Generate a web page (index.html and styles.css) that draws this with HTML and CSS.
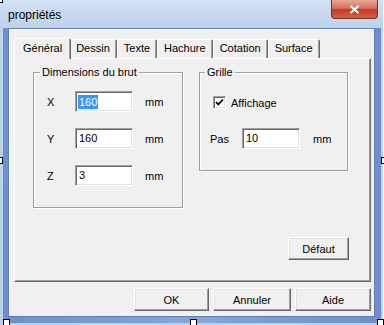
FILE: index.html
```html
<!DOCTYPE html>
<html>
<head>
    <title>propriétés</title>
    <link rel="stylesheet" href="styles.css">
</head>
<body>
    <div class="window">
        <div class="titlebar">
            <span class="title">propriétés</span>
            <div class="close">
                <svg width="11" height="9" viewBox="0 0 11 9">
                    <path d="M1.5 1 L9.5 8 M9.5 1 L1.5 8" stroke="#fff" stroke-width="2.2" fill="none"/>
                </svg>
            </div>
        </div>
        <div class="frame">
            <div class="client">
                <div class="tabs">
                    <div class="tab active">Général</div>
                    <div class="tab">Dessin</div>
                    <div class="tab">Texte</div>
                    <div class="tab">Hachure</div>
                    <div class="tab">Cotation</div>
                    <div class="tab">Surface</div>
                </div>
                <div class="panel">
                    <fieldset class="group dims">
                        <legend>Dimensions du brut</legend>
                        <div class="field">
                            <label>X</label>
                            <div class="textbox"><span class="sel">160</span></div>
                            <span class="unit">mm</span>
                        </div>
                        <div class="field">
                            <label>Y</label>
                            <div class="textbox">160</div>
                            <span class="unit">mm</span>
                        </div>
                        <div class="field">
                            <label>Z</label>
                            <div class="textbox">3</div>
                            <span class="unit">mm</span>
                        </div>
                    </fieldset>
                    <div class="side">
                        <fieldset class="group grille">
                            <legend>Grille</legend>
                            <div class="check-row">
                                <div class="checkbox">
                                    <svg width="9" height="9" viewBox="0 0 9 9">
                                        <path d="M1 4 L3.3 6.5 L8 1.5" stroke="#000" stroke-width="1.8" fill="none"/>
                                    </svg>
                                </div>
                                <span>Affichage</span>
                            </div>
                            <div class="field pas">
                                <label>Pas</label>
                                <div class="textbox">10</div>
                                <span class="unit">mm</span>
                            </div>
                        </fieldset>
                        <button class="btn defaut">Défaut</button>
                    </div>
                </div>
                <div class="actions">
                    <button class="btn ok">OK</button>
                    <button class="btn annuler">Annuler</button>
                    <button class="btn aide">Aide</button>
                </div>
            </div>
        </div>
    </div>

    <div class="handle h-tl"></div>
    <div class="handle h-left"></div>
    <div class="handle h-right"></div>
    <div class="handle h-bl"></div>
    <div class="handle h-bottom"></div>
    <div class="handle h-br"></div>
</body>
</html>
```

FILE: styles.css
```css
body {
    margin: 0;
    background-color: #ffffff;
    font-family: "Liberation Sans", Arial, sans-serif;
    font-size: 11px;
    color: #000;
    overflow: hidden;
}

.window {
    width: 383px;
    height: 325px;
    box-sizing: border-box;
    background: linear-gradient(#d3e1f3, #bdd2eb 28px, #bcd1ea);
    display: flex;
    flex-direction: column;
}

.titlebar {
    height: 28px;
    display: flex;
    align-items: flex-start;
    padding-left: 8px;
    flex-shrink: 0;
}

.title {
    font-size: 12px;
    line-height: 16px;
    margin-top: 7px;
}

.close {
    margin-left: auto;
    margin-right: 5px;
    width: 47px;
    height: 19px;
    box-sizing: border-box;
    border: 1px solid #7f2b1f;
    border-top: none;
    border-radius: 0 0 4px 4px;
    background: linear-gradient(#e9a99b, #d7705d 45%, #c2391f 55%, #d0644c);
    display: flex;
    align-items: center;
    justify-content: center;
}

.frame {
    flex: 1;
    margin: 0 2px 2px 3px;
    padding: 0 6px 6px 5px;
    background: linear-gradient(90deg, #6e8fc8, #87a6d8 50%, #6e8fc8);
    display: flex;
}

.client {
    flex: 1;
    border: 1px solid #5e7db3;
    background-color: #f0f0f0;
    box-shadow: inset 1px 1px #ffffff;
    padding: 8px 3px 0 5px;
    display: flex;
    flex-direction: column;
}

/* tabs */
.tabs {
    display: flex;
    align-items: flex-end;
    height: 21px;
    padding-left: 2px;
}

.tab {
    height: 18px;
    line-height: 17px;
    padding: 0 6px;
    border-top: 1px solid #ffffff;
    border-left: 1px solid #ffffff;
    border-right: 1px solid #696969;
    border-radius: 2px 2px 0 0;
    box-shadow: inset -1px 0 #a0a0a0;
}

.tab.active {
    height: 20px;
    line-height: 19px;
    margin: 0 -2px -1px -2px;
    padding: 0 8px;
    background-color: #f0f0f0;
    position: relative;
    z-index: 1;
}

.panel {
    height: 224px;
    box-sizing: border-box;
    border-top: 1px solid #ffffff;
    border-left: 1px solid #ffffff;
    border-right: 1px solid #696969;
    border-bottom: 1px solid #696969;
    box-shadow: inset -1px -1px #a0a0a0;
    padding: 7px 0 0 18px;
    display: flex;
    align-items: flex-start;
    gap: 16px;
}

/* group boxes */
.group {
    margin: 0;
    border: 1px solid #a0a0a0;
    box-shadow: 1px 1px 0 #ffffff, inset 1px 1px 0 #ffffff;
    box-sizing: border-box;
}

.group legend {
    padding: 0 2px;
    line-height: 13px;
}

.dims {
    width: 150px;
    height: 142px;
    padding: 12px 0 0 13px;
}

.dims legend {
    margin-left: -7px;
}

.grille {
    width: 149px;
    height: 105px;
    padding: 17px 0 0 10px;
}

.grille legend {
    margin-left: -5px;
}

.field {
    display: flex;
    align-items: center;
    margin-bottom: 16px;
}

.field label {
    width: 28px;
}

.field .unit {
    margin-left: 12px;
}

.textbox {
    width: 58px;
    height: 21px;
    box-sizing: border-box;
    border: 1px solid;
    border-color: #a0a0a0 #ffffff #ffffff #a0a0a0;
    box-shadow: inset 1px 1px #696969, inset -1px -1px #e3e3e3;
    background-color: #ffffff;
    padding: 3px 0 0 3px;
    line-height: 13px;
}

.sel {
    display: inline-block;
    background-color: #3399ff;
    color: #ffffff;
    height: 14px;
    line-height: 14px;
    margin-left: -1px;
    padding: 0 1px;
}

.check-row {
    display: flex;
    align-items: center;
    gap: 5px;
    margin-left: 3px;
    height: 13px;
    margin-bottom: 19px;
}

.checkbox {
    width: 13px;
    height: 13px;
    box-sizing: border-box;
    border: 1px solid;
    border-color: #a0a0a0 #ffffff #ffffff #a0a0a0;
    box-shadow: inset 1px 1px #696969, inset -1px -1px #e3e3e3;
    background-color: #ffffff;
    display: flex;
    align-items: center;
    justify-content: center;
}

.pas label {
    width: 32px;
}

.pas .unit {
    margin-left: 13px;
}

.side {
    display: flex;
    flex-direction: column;
    align-items: flex-end;
}

/* buttons */
.btn {
    font-family: inherit;
    font-size: 11px;
    color: #000;
    height: 23px;
    padding: 0;
    background-color: #f0f0f0;
    border: 1px solid;
    border-color: #ffffff #696969 #696969 #ffffff;
    box-shadow: inset -1px -1px #a0a0a0, inset 1px 1px #e3e3e3;
}

.defaut {
    width: 61px;
    margin-top: 66px;
    margin-right: -1px;
}

.actions {
    display: flex;
    justify-content: flex-end;
    gap: 4px;
    margin-top: 6px;
}

.ok {
    width: 75px;
}

.annuler {
    width: 78px;
}

.aide {
    width: 76px;
}

/* selection handles of the designer */
.handle {
    position: absolute;
    width: 5px;
    height: 5px;
    border: 1px solid #000;
    background-color: #fff;
}

.h-tl {
    left: -4px;
    top: -4px;
}

.h-left {
    left: -4px;
    top: 157px;
}

.h-right {
    left: 381px;
    top: 157px;
}

.h-bl {
    left: 3px;
    top: 319px;
}

.h-bottom {
    left: 190px;
    top: 319px;
}

.h-br {
    left: 377px;
    top: 319px;
}
```
